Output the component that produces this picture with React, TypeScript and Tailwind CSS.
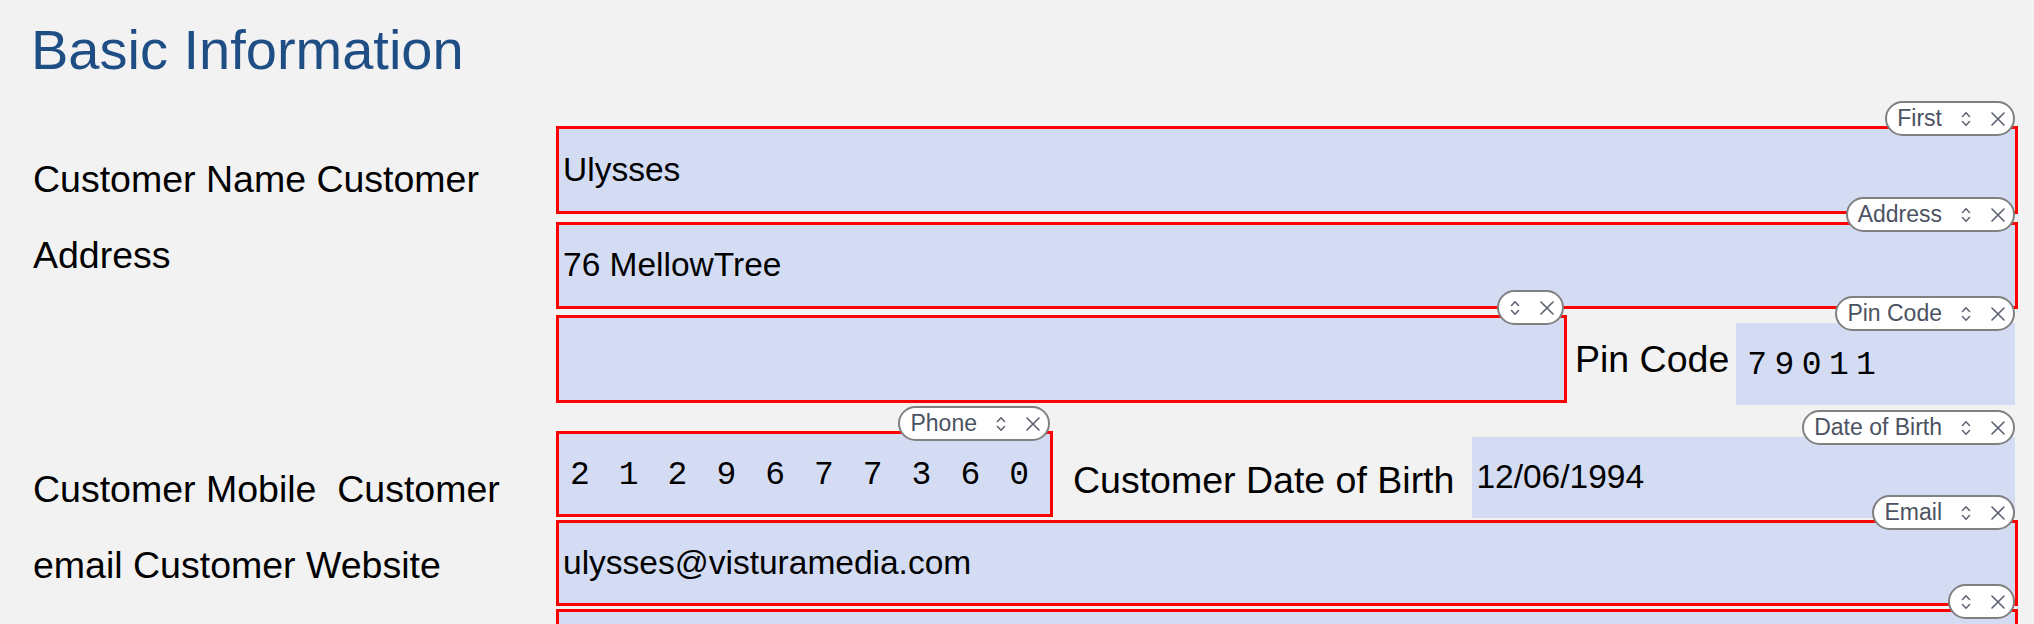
import React from "react";

function ChevronIcon() {
  return (
    <svg width="10" height="16" viewBox="0 0 10 16" fill="none" className="shrink-0">
      <path d="M1.5 5.5 L5 1.8 L8.5 5.5" stroke="#5b6070" strokeWidth="1.5" strokeLinecap="round" strokeLinejoin="round" />
      <path d="M1.5 10.5 L5 14.2 L8.5 10.5" stroke="#5b6070" strokeWidth="1.5" strokeLinecap="round" strokeLinejoin="round" />
    </svg>
  );
}

function XIcon() {
  return (
    <svg width="14" height="14" viewBox="0 0 14 14" fill="none" className="shrink-0">
      <path d="M1 1 L13 13 M13 1 L1 13" stroke="#5b6070" strokeWidth="1.6" strokeLinecap="round" />
    </svg>
  );
}

function Pill({ label, top }: { label?: string; top: string }) {
  return (
    <div
      className={`absolute right-0 ${top} z-10 flex h-[35px] items-center rounded-full border-2 border-[#808080] bg-white pr-[8px] tracking-normal ${
        label ? "pl-[10px]" : "pl-[11px]"
      }`}
      style={{ fontFamily: '"Liberation Sans", Arial, sans-serif' }}
    >
      {label ? (
        <span className="mr-[19px] whitespace-nowrap text-[23px] leading-none text-[#4b5262]">{label}</span>
      ) : null}
      <ChevronIcon />
      <span className="ml-[20px] flex">
        <XIcon />
      </span>
    </div>
  );
}

const mono = { fontFamily: '"Liberation Mono", "Courier New", monospace' };

export default function App() {
  return (
    <div
      className="min-h-screen w-full overflow-hidden bg-[#f2f2f2] text-black"
      style={{ fontFamily: '"Liberation Sans", Arial, sans-serif' }}
    >
      <h1 className="pl-[31px] pt-[22px] text-[56px] font-normal leading-[55px] text-[#1f4e85]">
        Basic Information
      </h1>

      {/* Section 1 */}
      <div className="mt-[49px] flex pr-[16px]">
        <div className="w-[556px] shrink-0 pl-[33px] pr-[10px] pt-[15px] text-[37.5px] leading-[76px]">
          Customer Name Customer Address
        </div>
        <div className="flex flex-1 flex-col">
          <div className="relative flex h-[88px] items-center border-[3px] border-[#ff0000] bg-[#d4dcf4] pl-[4px] text-[33.5px]">
            <Pill label="First" top="top-[-28px]" />
            Ulysses
          </div>
          <div className="relative mt-[8px] flex h-[87px] items-center border-[3px] border-[#ff0000] bg-[#d4dcf4] pl-[4px] text-[33.5px]">
            <Pill label="Address" top="top-[-28px]" />
            76 MellowTree
          </div>
          <div className="mt-[6px] flex items-start">
            <div className="relative h-[88px] w-[1011px] shrink-0 border-[3px] border-[#ff0000] bg-[#d4dcf4]">
              <Pill top="top-[-28px]" />
            </div>
            <div className="ml-[8px] mt-[26px] whitespace-nowrap text-[37.5px] leading-[37px]">Pin Code</div>
            <div className="relative ml-[7px] mr-[3px] mt-[8px] flex h-[82px] flex-1 items-center bg-[#d4dcf4] pl-[11px] pt-[4px] text-[33px]">
              <Pill label="Pin Code" top="top-[-27px]" />
              <span className="whitespace-nowrap tracking-[7.4px]" style={mono}>
                79011
              </span>
            </div>
          </div>
        </div>
      </div>

      {/* Section 2 */}
      <div className="mt-[26px] flex pr-[16px]">
        <div className="flex w-[556px] shrink-0 flex-col pl-[33px] pr-[10px] pt-[20px] text-[37.5px] leading-[76px]">
          <div className="whitespace-pre">Customer Mobile  Customer</div>
          <div className="whitespace-nowrap">email Customer Website</div>
        </div>
        <div className="flex flex-1 flex-col">
          <div className="flex items-start">
            <div className="relative flex h-[86px] w-[497px] shrink-0 items-center border-[3px] border-[#ff0000] bg-[#d4dcf4] pl-[11px] pt-[4px] text-[33px]">
              <Pill label="Phone" top="top-[-28px]" />
              <span className="whitespace-nowrap tracking-[29px]" style={mono}>
                2129677360
              </span>
            </div>
            <div className="ml-[20px] mt-[31px] whitespace-nowrap text-[37.5px] leading-[37px]">
              Customer Date of Birth
            </div>
            <div className="relative ml-[18px] mr-[3px] mt-[6px] flex h-[81px] flex-1 items-center bg-[#d4dcf4] pl-[4px] text-[33.5px]">
              <Pill label="Date of Birth" top="top-[-27px]" />
              12/06/1994
            </div>
          </div>
          <div className="relative mt-[2px] flex h-[86px] items-center border-[3px] border-[#ff0000] bg-[#d4dcf4] pl-[4px] text-[33.5px]">
            <Pill label="Email" top="top-[-28px]" />
            ulysses@visturamedia.com
          </div>
          <div className="relative mt-[3px] flex h-[88px] items-center border-[3px] border-[#ff0000] bg-[#d4dcf4] pl-[4px] text-[33.5px]">
            <Pill top="top-[-28px]" />
          </div>
        </div>
      </div>
    </div>
  );
}
